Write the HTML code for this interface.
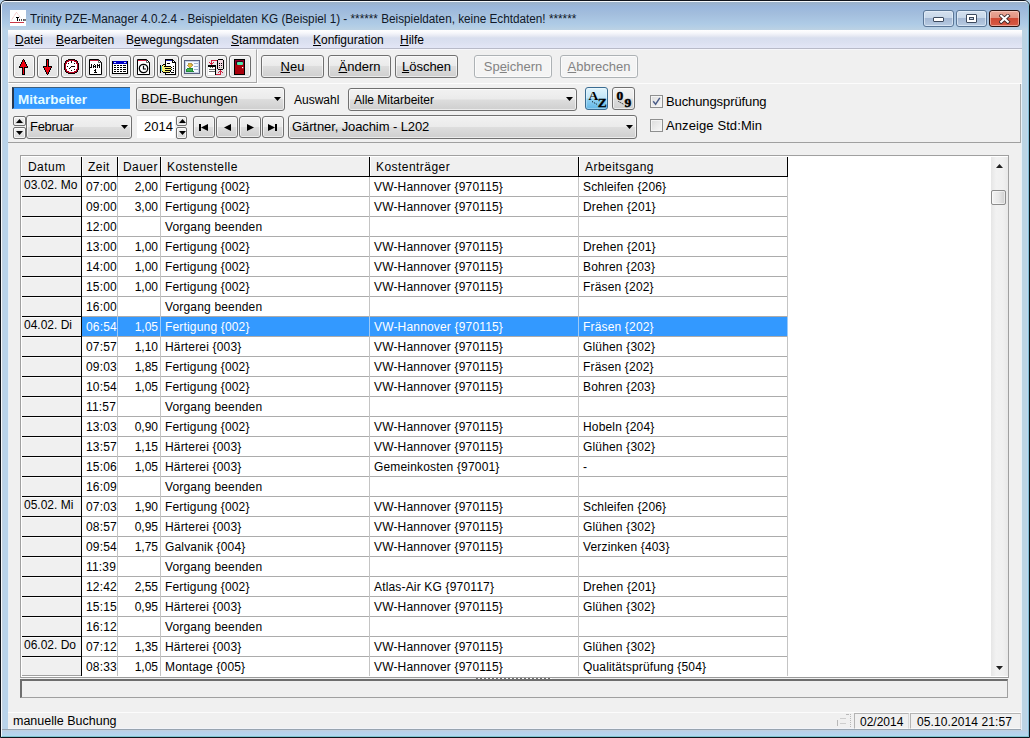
<!DOCTYPE html>
<html><head><meta charset="utf-8">
<style>
*{box-sizing:border-box}
html,body{margin:0;padding:0}
body{width:1030px;height:738px;overflow:hidden;position:relative;background:#b9d3ea;font-family:"Liberation Sans",sans-serif;font-size:12px;color:#000}
.a{position:absolute}
#frame{left:0;top:0;width:1030px;height:738px;border:1px solid #10141c;border-radius:6px 6px 0 0}
#frame2{left:1px;top:1px;width:1028px;height:736px;border:1px solid #f4f8fc;border-right-color:#84bcd0;border-bottom-color:#80c4d0;border-radius:5px 5px 0 0}
#titlebg{left:2px;top:2px;width:1026px;height:28px;background:linear-gradient(#9bb2ca 0px,#9ab7dc 5px,#a3bedd 12px,#aecbe6 22px,#bcd2e4 28px);border-radius:4px 4px 0 0}
#leftfr{left:2px;top:30px;width:6px;height:700px;background:#b9d3ea;border-left:1px solid #c4d2e0}
#rightfr{left:1021px;top:30px;width:7px;height:700px;background:linear-gradient(90deg,#e8f0f8 0 1px,#bcd4e4 1px 6px,#b8d8f4 6px)}
#bottomfr{left:2px;top:729px;width:1026px;height:7px;background:linear-gradient(#c0d0dc,#b8d0ea 30%,#b4d8ee);border-top:1px solid #98a4b0}
#title{left:30px;top:12px;font-size:12.5px;color:#101828;white-space:nowrap;transform-origin:0 0;transform:scaleX(0.939)}
#client{left:8px;top:30px;width:1014px;height:699px;background:#f0f0f0;border-left:1px solid #e8f0f8}
/* menu */
#menubar{left:8px;top:30px;width:1014px;height:19px;background:linear-gradient(#ffffff 0px,#f6f7fb 3px,#e6e9f3 6px,#d8deee 8px,#dbe0f0 12px,#e3e6f6 18px);border-bottom:1px solid #b8bac8}
.mi{position:absolute;top:33px;font-size:12px;white-space:nowrap;color:#000}
.u{text-decoration:underline}
/* toolbar */
#tbar{left:8px;top:49px;width:1014px;height:35px;background:#f0f0f0;border-top:1px solid #f6f6fa;border-bottom:1px solid #fcfcfc}
.tb{position:absolute;top:55px;width:22px;height:23px;border:1px solid #6c6c6c;border-radius:3px;background:linear-gradient(#f0f0f0,#e8e8e8 50%,#e2e2e2);box-shadow:inset 0 0 0 1px #fafafa}
.btn{position:absolute;top:55px;height:23px;border:1px solid #707070;border-radius:3px;background:linear-gradient(#f2f2f2,#ebebeb 45%,#dddddd 50%,#cfcfcf);text-align:center;font-size:13px;line-height:22px;color:#000;box-shadow:inset 0 0 0 1px rgba(255,255,255,0.6)}
.btn.dis{border-color:#adb2b5;background:#f4f4f4;color:#838383}
/* panel */
#panelline{left:8px;top:142px;width:1013px;height:1px;background:#a0a0a0}
.combo{position:absolute;height:23px;border:1px solid #707070;border-radius:3px;background:linear-gradient(#f2f2f2,#ebebeb 48%,#dddddd 52%,#cfcfcf);box-shadow:inset 0 0 0 1px rgba(255,255,255,0.6)}
.spn{position:absolute;border:1px solid #707070;border-radius:2px;background:linear-gradient(#f4f4f4,#e4e4e4 50%,#d8d8d8);box-shadow:inset 0 0 0 1px rgba(255,255,255,0.7)}
.txt{white-space:nowrap}
.combo .arr{position:absolute;right:8px;top:9px;width:0;height:0;border-left:4px solid transparent;border-right:4px solid transparent;border-top:4px solid #000}
/* grid */
#gridbox{left:20px;top:155px;width:989px;height:523px;border:1px solid #a0a0a0;border-bottom-color:#9a9a9a;background:#fff}
.hc{position:absolute;top:157px;height:19px;background:#f0f0f0;border-left:1px solid #fff}
.hc span{position:absolute;top:3px;white-space:nowrap;letter-spacing:0.45px}
.hl{position:absolute;top:157px;width:1px;height:20px;background:#000}
.hb{position:absolute;top:176px;height:1px;background:#000}
.fc{position:absolute;left:21px;width:61px;height:20px;background:#f0f0f0;border-right:1px solid #000;border-left:1px solid #fff;box-shadow:inset 0 1px 0 #fafafa}
.fc::after{content:"";position:absolute;left:0;right:0;bottom:0;height:1px;background:#000}
.fc.last{height:19px}
.fc.last::after{background:#a0a0a0}
.fc span{position:absolute;left:2px;top:1px;white-space:nowrap}
.dc{position:absolute;height:19px;overflow:hidden}
.dc span{position:absolute;left:4px;top:3px;white-space:nowrap;letter-spacing:0.17px}
.dc.r span{left:auto;right:2px;letter-spacing:0}
.dc.s{color:#fff}
.selrow{position:absolute;left:82px;width:706px;height:19px;background:#3399ff}
.gh{position:absolute;left:82px;width:706px;height:1px;background:#acacac}
.gv{position:absolute;top:177px;width:1px;height:499px;background:#c4c4c4}
#vscroll{left:991px;top:157px;width:17px;height:519px;background:linear-gradient(90deg,#e6e6e6,#f2f2f2 30%,#f0f0f0 70%,#e8e8e8)}
#hbar{left:20px;top:679px;width:988px;height:19px;border:1px solid #a0a0a0;border-top:2px solid #6e6e6e;border-left:2px solid #6e6e6e;background:#f0f0f0}
#status{left:8px;top:712px;width:1013px;height:17px;background:#f0f0f0;border-top:1px solid #fcfcfc;border-bottom:1px solid #f2f4fa}
.sp{position:absolute;top:713px;height:16px;border:1px solid #b4b4b4;border-right-color:#d8d8d8;border-bottom-color:#f8f8f8}
</style></head><body>
<div id="frame" class="a"></div>
<div id="frame2" class="a"></div>
<div id="titlebg" class="a"></div>
<div id="leftfr" class="a"></div>
<div id="bottomfr" class="a"></div>
<div id="client" class="a"></div>
<div id="rightfr" class="a"></div>

<!-- title icon -->
<div class="a" style="left:10px;top:10px;width:16px;height:16px;background:#fff">
<svg width="16" height="16" viewBox="0 0 16 16" shape-rendering="crispEdges"><path d="M1.3 10.5 L6.4 2.2 L10.3 7.6" fill="none" stroke="#e8a8a8" stroke-width="0.8" stroke-dasharray="1 0.6" shape-rendering="auto"/><rect x="6" y="7" width="3.2" height="1.2" fill="#000"/><rect x="7" y="7" width="1.3" height="3.6" fill="#000"/><rect x="9" y="9" width="1" height="1.6" fill="#333"/><rect x="10.5" y="9" width="1.5" height="1.6" fill="#555"/><rect x="12.5" y="9" width="1.5" height="1.6" fill="#555"/><rect x="14.3" y="9" width="1.5" height="1.6" fill="#777"/><rect x="0" y="12" width="14" height="1" fill="#c83848"/></svg>
</div>
<div id="title" class="a">Trinity PZE-Manager 4.0.2.4 - Beispieldaten KG (Beispiel 1) - ****** Beispieldaten, keine Echtdaten! ******</div>

<!-- caption buttons -->
<div class="a" style="left:923px;top:10px;width:31px;height:17px;border:1px solid #5a7696;border-radius:3px;background:linear-gradient(#d4e0ee,#c8d8ea 45%,#a4b8d4 50%,#b8cce2);box-shadow:inset 0 0 0 1px rgba(235,245,255,0.6)"><div class="a" style="left:9px;top:6px;width:11px;height:5px;background:#fff;border:1px solid #3c4a5e;border-radius:1px"></div></div>
<div class="a" style="left:956px;top:10px;width:31px;height:17px;border:1px solid #5a7696;border-radius:3px;background:linear-gradient(#d4e0ee,#c8d8ea 45%,#a4b8d4 50%,#b8cce2);box-shadow:inset 0 0 0 1px rgba(235,245,255,0.6)"><div class="a" style="left:9px;top:3px;width:11px;height:9px;background:#fff;border:1px solid #3c4a5e;border-radius:1px"><div class="a" style="left:2px;top:2px;width:5px;height:3px;border:1px solid #3c4a5e;background:#c8d4e4"></div></div></div>
<div class="a" style="left:989px;top:10px;width:31px;height:17px;border:1px solid #2a1412;border-radius:3px;background:linear-gradient(#eaa898,#e29482 45%,#cf4a34 50%,#d85a44);box-shadow:inset 0 0 0 1px rgba(255,220,210,0.55)"><svg class="a" style="left:9px;top:3px" width="12" height="10" viewBox="0 0 12 10"><path d="M2.2 1.8 L8.8 7.8 M8.8 1.8 L2.2 7.8" stroke="#3a2424" stroke-width="3.8" stroke-linecap="square"/><path d="M2.2 1.8 L8.8 7.8 M8.8 1.8 L2.2 7.8" stroke="#fff" stroke-width="2.2" stroke-linecap="square"/></svg></div>

<!-- menu -->
<div id="menubar" class="a"></div>
<div class="mi" style="left:15px"><span class="u">D</span>atei</div>
<div class="mi" style="left:56px"><span class="u">B</span>earbeiten</div>
<div class="mi" style="left:126px">B<span class="u">e</span>wegungsdaten</div>
<div class="mi" style="left:231px"><span class="u">S</span>tammdaten</div>
<div class="mi" style="left:313px"><span class="u">K</span>onfiguration</div>
<div class="mi" style="left:400px"><span class="u">H</span>ilfe</div>

<!-- toolbar -->
<div id="tbar" class="a"></div>
<div class="a" style="left:8px;top:49px;width:249px;height:34px;border-top:1px solid #fafafa;border-left:1px solid #fafafa;border-right:1px solid #a8a8a8;border-bottom:1px solid #a8a8a8;box-shadow:1px 1px 0 #fff"></div>
<div class="tb" style="left:13px"><svg class="a" style="left:2px;top:3px" width="16" height="16" viewBox="0 0 16 16"><g shape-rendering="crispEdges"><rect x="7" y="0" width="1" height="1" fill="#000"/><rect x="6" y="1" width="1" height="1" fill="#000"/><rect x="7" y="1" width="1" height="1" fill="#f00010"/><rect x="8" y="1" width="1" height="1" fill="#000"/><rect x="6" y="2" width="1" height="1" fill="#000"/><rect x="7" y="2" width="1" height="1" fill="#f00010"/><rect x="8" y="2" width="1" height="1" fill="#000"/><rect x="5" y="3" width="1" height="1" fill="#000"/><rect x="6" y="3" width="3" height="1" fill="#f00010"/><rect x="9" y="3" width="1" height="1" fill="#000"/><rect x="5" y="4" width="1" height="1" fill="#000"/><rect x="6" y="4" width="3" height="1" fill="#f00010"/><rect x="9" y="4" width="1" height="1" fill="#000"/><rect x="4" y="5" width="1" height="1" fill="#000"/><rect x="5" y="5" width="5" height="1" fill="#f00010"/><rect x="10" y="5" width="1" height="1" fill="#000"/><rect x="4" y="6" width="1" height="1" fill="#000"/><rect x="5" y="6" width="5" height="1" fill="#f00010"/><rect x="10" y="6" width="1" height="1" fill="#000"/><rect x="3" y="7" width="1" height="1" fill="#000"/><rect x="4" y="7" width="7" height="1" fill="#f00010"/><rect x="11" y="7" width="1" height="1" fill="#000"/><rect x="3" y="8" width="4" height="1" fill="#000"/><rect x="7" y="8" width="1" height="1" fill="#f00010"/><rect x="8" y="8" width="4" height="1" fill="#000"/><rect x="6" y="9" width="1" height="1" fill="#000"/><rect x="7" y="9" width="1" height="1" fill="#f00010"/><rect x="8" y="9" width="1" height="1" fill="#000"/><rect x="6" y="10" width="1" height="1" fill="#000"/><rect x="7" y="10" width="1" height="1" fill="#f00010"/><rect x="8" y="10" width="1" height="1" fill="#000"/><rect x="6" y="11" width="1" height="1" fill="#000"/><rect x="7" y="11" width="1" height="1" fill="#f00010"/><rect x="8" y="11" width="1" height="1" fill="#000"/><rect x="6" y="12" width="1" height="1" fill="#000"/><rect x="7" y="12" width="1" height="1" fill="#f00010"/><rect x="8" y="12" width="1" height="1" fill="#000"/><rect x="6" y="13" width="1" height="1" fill="#000"/><rect x="7" y="13" width="1" height="1" fill="#f00010"/><rect x="8" y="13" width="1" height="1" fill="#000"/><rect x="6" y="14" width="1" height="1" fill="#000"/><rect x="7" y="14" width="1" height="1" fill="#f00010"/><rect x="8" y="14" width="1" height="1" fill="#000"/><rect x="6" y="15" width="3" height="1" fill="#000"/></g></svg></div>
<div class="tb" style="left:37px"><svg class="a" style="left:2px;top:3px" width="16" height="16" viewBox="0 0 16 16"><g shape-rendering="crispEdges"><rect x="6" y="0" width="3" height="1" fill="#000"/><rect x="6" y="1" width="1" height="1" fill="#000"/><rect x="7" y="1" width="1" height="1" fill="#f00010"/><rect x="8" y="1" width="1" height="1" fill="#000"/><rect x="6" y="2" width="1" height="1" fill="#000"/><rect x="7" y="2" width="1" height="1" fill="#f00010"/><rect x="8" y="2" width="1" height="1" fill="#000"/><rect x="6" y="3" width="1" height="1" fill="#000"/><rect x="7" y="3" width="1" height="1" fill="#f00010"/><rect x="8" y="3" width="1" height="1" fill="#000"/><rect x="6" y="4" width="1" height="1" fill="#000"/><rect x="7" y="4" width="1" height="1" fill="#f00010"/><rect x="8" y="4" width="1" height="1" fill="#000"/><rect x="6" y="5" width="1" height="1" fill="#000"/><rect x="7" y="5" width="1" height="1" fill="#f00010"/><rect x="8" y="5" width="1" height="1" fill="#000"/><rect x="6" y="6" width="1" height="1" fill="#000"/><rect x="7" y="6" width="1" height="1" fill="#f00010"/><rect x="8" y="6" width="1" height="1" fill="#000"/><rect x="3" y="7" width="4" height="1" fill="#000"/><rect x="7" y="7" width="1" height="1" fill="#f00010"/><rect x="8" y="7" width="4" height="1" fill="#000"/><rect x="3" y="8" width="1" height="1" fill="#000"/><rect x="4" y="8" width="7" height="1" fill="#f00010"/><rect x="11" y="8" width="1" height="1" fill="#000"/><rect x="4" y="9" width="1" height="1" fill="#000"/><rect x="5" y="9" width="5" height="1" fill="#f00010"/><rect x="10" y="9" width="1" height="1" fill="#000"/><rect x="4" y="10" width="1" height="1" fill="#000"/><rect x="5" y="10" width="5" height="1" fill="#f00010"/><rect x="10" y="10" width="1" height="1" fill="#000"/><rect x="5" y="11" width="1" height="1" fill="#000"/><rect x="6" y="11" width="3" height="1" fill="#f00010"/><rect x="9" y="11" width="1" height="1" fill="#000"/><rect x="5" y="12" width="1" height="1" fill="#000"/><rect x="6" y="12" width="3" height="1" fill="#f00010"/><rect x="9" y="12" width="1" height="1" fill="#000"/><rect x="6" y="13" width="1" height="1" fill="#000"/><rect x="7" y="13" width="1" height="1" fill="#f00010"/><rect x="8" y="13" width="1" height="1" fill="#000"/><rect x="6" y="14" width="1" height="1" fill="#000"/><rect x="7" y="14" width="1" height="1" fill="#f00010"/><rect x="8" y="14" width="1" height="1" fill="#000"/><rect x="7" y="15" width="1" height="1" fill="#000"/></g></svg></div>
<div class="tb" style="left:61px"><svg class="a" style="left:2px;top:3px" width="16" height="16" viewBox="0 0 16 16"><g shape-rendering="crispEdges"><rect x="4" y="0" width="7" height="1" fill="#100000"/><rect x="2" y="1" width="2" height="1" fill="#100000"/><rect x="4" y="1" width="7" height="1" fill="#b80020"/><rect x="11" y="1" width="2" height="1" fill="#100000"/><rect x="1" y="2" width="1" height="1" fill="#100000"/><rect x="2" y="2" width="3" height="1" fill="#b80020"/><rect x="5" y="2" width="2" height="1" fill="#fff"/><rect x="7" y="2" width="1" height="1" fill="#100000"/><rect x="8" y="2" width="2" height="1" fill="#fff"/><rect x="10" y="2" width="3" height="1" fill="#b80020"/><rect x="13" y="2" width="1" height="1" fill="#100000"/><rect x="1" y="3" width="1" height="1" fill="#100000"/><rect x="2" y="3" width="1" height="1" fill="#b80020"/><rect x="3" y="3" width="4" height="1" fill="#fff"/><rect x="7" y="3" width="1" height="1" fill="#100000"/><rect x="8" y="3" width="4" height="1" fill="#fff"/><rect x="12" y="3" width="1" height="1" fill="#b80020"/><rect x="13" y="3" width="1" height="1" fill="#100000"/><rect x="0" y="4" width="1" height="1" fill="#100000"/><rect x="1" y="4" width="2" height="1" fill="#b80020"/><rect x="3" y="4" width="1" height="1" fill="#fff"/><rect x="4" y="4" width="1" height="1" fill="#100000"/><rect x="5" y="4" width="5" height="1" fill="#fff"/><rect x="10" y="4" width="1" height="1" fill="#100000"/><rect x="11" y="4" width="1" height="1" fill="#fff"/><rect x="12" y="4" width="2" height="1" fill="#b80020"/><rect x="14" y="4" width="1" height="1" fill="#100000"/><rect x="0" y="5" width="1" height="1" fill="#100000"/><rect x="1" y="5" width="1" height="1" fill="#b80020"/><rect x="2" y="5" width="11" height="1" fill="#fff"/><rect x="13" y="5" width="1" height="1" fill="#b80020"/><rect x="14" y="5" width="1" height="1" fill="#100000"/><rect x="0" y="6" width="1" height="1" fill="#100000"/><rect x="1" y="6" width="1" height="1" fill="#b80020"/><rect x="2" y="6" width="11" height="1" fill="#fff"/><rect x="13" y="6" width="1" height="1" fill="#b80020"/><rect x="14" y="6" width="1" height="1" fill="#100000"/><rect x="0" y="7" width="1" height="1" fill="#100000"/><rect x="1" y="7" width="1" height="1" fill="#b80020"/><rect x="2" y="7" width="1" height="1" fill="#fff"/><rect x="3" y="7" width="1" height="1" fill="#100000"/><rect x="4" y="7" width="3" height="1" fill="#fff"/><rect x="7" y="7" width="4" height="1" fill="#100000"/><rect x="11" y="7" width="2" height="1" fill="#fff"/><rect x="13" y="7" width="1" height="1" fill="#b80020"/><rect x="14" y="7" width="1" height="1" fill="#100000"/><rect x="0" y="8" width="1" height="1" fill="#100000"/><rect x="1" y="8" width="1" height="1" fill="#b80020"/><rect x="2" y="8" width="4" height="1" fill="#fff"/><rect x="6" y="8" width="1" height="1" fill="#100000"/><rect x="7" y="8" width="6" height="1" fill="#fff"/><rect x="13" y="8" width="1" height="1" fill="#b80020"/><rect x="14" y="8" width="1" height="1" fill="#100000"/><rect x="0" y="9" width="1" height="1" fill="#100000"/><rect x="1" y="9" width="1" height="1" fill="#b80020"/><rect x="2" y="9" width="3" height="1" fill="#fff"/><rect x="5" y="9" width="1" height="1" fill="#100000"/><rect x="6" y="9" width="7" height="1" fill="#fff"/><rect x="13" y="9" width="1" height="1" fill="#b80020"/><rect x="14" y="9" width="1" height="1" fill="#100000"/><rect x="0" y="10" width="1" height="1" fill="#100000"/><rect x="1" y="10" width="2" height="1" fill="#b80020"/><rect x="3" y="10" width="7" height="1" fill="#fff"/><rect x="10" y="10" width="1" height="1" fill="#100000"/><rect x="11" y="10" width="1" height="1" fill="#fff"/><rect x="12" y="10" width="2" height="1" fill="#b80020"/><rect x="14" y="10" width="1" height="1" fill="#100000"/><rect x="1" y="11" width="1" height="1" fill="#100000"/><rect x="2" y="11" width="1" height="1" fill="#b80020"/><rect x="3" y="11" width="4" height="1" fill="#fff"/><rect x="7" y="11" width="1" height="1" fill="#100000"/><rect x="8" y="11" width="4" height="1" fill="#fff"/><rect x="12" y="11" width="1" height="1" fill="#b80020"/><rect x="13" y="11" width="1" height="1" fill="#100000"/><rect x="1" y="12" width="1" height="1" fill="#100000"/><rect x="2" y="12" width="3" height="1" fill="#b80020"/><rect x="5" y="12" width="5" height="1" fill="#fff"/><rect x="10" y="12" width="3" height="1" fill="#b80020"/><rect x="13" y="12" width="1" height="1" fill="#100000"/><rect x="2" y="13" width="2" height="1" fill="#100000"/><rect x="4" y="13" width="7" height="1" fill="#b80020"/><rect x="11" y="13" width="2" height="1" fill="#100000"/><rect x="4" y="14" width="7" height="1" fill="#100000"/></g></svg></div>
<div class="tb" style="left:85px"><svg class="a" style="left:2px;top:3px" width="16" height="16" viewBox="0 0 16 16"><path d="M1.5 0.5 H10.5 L13.5 3.5 V15.5 H1.5 Z" fill="#fff" stroke="#000"/><rect x="2" y="1" width="8.5" height="1" fill="#c82040"/><path d="M10.5 0.5 V3.5 H13.5" fill="none" stroke="#000" stroke-width="0.6"/><g fill="#000" shape-rendering="crispEdges"><rect x="3" y="5" width="1" height="4"/><rect x="2" y="8" width="1" height="1"/><rect x="6" y="5" width="1" height="1"/><rect x="5" y="6" width="1" height="3"/><rect x="7" y="6" width="1" height="3"/><rect x="6" y="7" width="1" height="1"/><rect x="9" y="5" width="1" height="4"/><rect x="11" y="5" width="1" height="4"/><rect x="10" y="6" width="1" height="1"/><rect x="7" y="10" width="1" height="4"/><rect x="6" y="11" width="1" height="1"/><rect x="6" y="13" width="3" height="1"/></g></svg></div>
<div class="tb" style="left:109px"><svg class="a" style="left:2px;top:3px" width="16" height="16" viewBox="0 0 16 16"><g shape-rendering="crispEdges"><rect x="0" y="2" width="16" height="13" fill="#000"/><rect x="1" y="5" width="14" height="9" fill="#fff"/><rect x="1" y="2" width="14" height="3" fill="#0000c8"/><rect x="2" y="3" width="2" height="1" fill="#c8d8ff"/><rect x="12" y="3" width="2" height="1" fill="#c8d8ff"/><g fill="#000"><rect x="2" y="6" width="2" height="1"/><rect x="5" y="6" width="2" height="1"/><rect x="8" y="6" width="2" height="1"/><rect x="11" y="6" width="3" height="1"/><rect x="2" y="8" width="2" height="1"/><rect x="5" y="8" width="2" height="1"/><rect x="8" y="8" width="2" height="1"/><rect x="11" y="8" width="3" height="1"/><rect x="2" y="10" width="2" height="1"/><rect x="5" y="10" width="2" height="1"/><rect x="8" y="10" width="2" height="1"/><rect x="11" y="10" width="3" height="1"/><rect x="2" y="12" width="2" height="1"/><rect x="5" y="12" width="2" height="1"/><rect x="8" y="12" width="2" height="1"/><rect x="11" y="12" width="3" height="1"/></g></g></svg></div>
<div class="tb" style="left:133px"><svg class="a" style="left:2px;top:3px" width="16" height="16" viewBox="0 0 16 16"><path d="M1.5 0.5 H10.5 L13.5 3.5 V15.5 H1.5 Z" fill="#fff" stroke="#000"/><rect x="2" y="1" width="8.5" height="1" fill="#c82040"/><path d="M10.5 0.5 V3.5 H13.5" fill="none" stroke="#000" stroke-width="0.6"/><circle cx="7.5" cy="9.5" r="4.2" fill="none" stroke="#000" stroke-width="1.3"/><path d="M7.5 6.8 V10 H10" fill="none" stroke="#000" stroke-width="1.2"/></svg></div>
<div class="tb" style="left:157px"><svg class="a" style="left:2px;top:3px" width="16" height="16" viewBox="0 0 16 16"><g shape-rendering="crispEdges"><rect x="5" y="0" width="8" height="1" fill="#000"/><rect x="5" y="1" width="1" height="1" fill="#000"/><rect x="6" y="1" width="6" height="1" fill="#2828a8"/><rect x="12" y="1" width="2" height="1" fill="#000"/><rect x="5" y="2" width="1" height="1" fill="#000"/><rect x="6" y="2" width="6" height="1" fill="#fff"/><rect x="12" y="2" width="1" height="1" fill="#000"/><rect x="13" y="2" width="1" height="1" fill="#fff"/><rect x="14" y="2" width="1" height="1" fill="#000"/><rect x="5" y="3" width="1" height="1" fill="#000"/><rect x="6" y="3" width="6" height="1" fill="#fff"/><rect x="12" y="3" width="4" height="1" fill="#000"/><rect x="5" y="4" width="1" height="1" fill="#000"/><rect x="6" y="4" width="1" height="1" fill="#fff"/><rect x="7" y="4" width="3" height="1" fill="#000"/><rect x="10" y="4" width="5" height="1" fill="#fff"/><rect x="15" y="4" width="1" height="1" fill="#000"/><rect x="3" y="5" width="3" height="1" fill="#000"/><rect x="6" y="5" width="9" height="1" fill="#fff"/><rect x="15" y="5" width="1" height="1" fill="#000"/><rect x="0" y="6" width="1" height="1" fill="#000"/><rect x="2" y="6" width="1" height="1" fill="#000"/><rect x="3" y="6" width="2" height="1" fill="#f8f070"/><rect x="5" y="6" width="1" height="1" fill="#000"/><rect x="6" y="6" width="9" height="1" fill="#fff"/><rect x="15" y="6" width="1" height="1" fill="#000"/><rect x="0" y="7" width="1" height="1" fill="#000"/><rect x="1" y="7" width="1" height="1" fill="#40d0d0"/><rect x="2" y="7" width="2" height="1" fill="#f8f070"/><rect x="4" y="7" width="7" height="1" fill="#000"/><rect x="11" y="7" width="2" height="1" fill="#fff"/><rect x="13" y="7" width="1" height="1" fill="#000"/><rect x="14" y="7" width="1" height="1" fill="#fff"/><rect x="15" y="7" width="1" height="1" fill="#000"/><rect x="0" y="8" width="1" height="1" fill="#000"/><rect x="1" y="8" width="1" height="1" fill="#40d0d0"/><rect x="2" y="8" width="9" height="1" fill="#f8f070"/><rect x="11" y="8" width="1" height="1" fill="#000"/><rect x="12" y="8" width="3" height="1" fill="#fff"/><rect x="15" y="8" width="1" height="1" fill="#000"/><rect x="0" y="9" width="1" height="1" fill="#000"/><rect x="1" y="9" width="1" height="1" fill="#40d0d0"/><rect x="2" y="9" width="3" height="1" fill="#f8f070"/><rect x="5" y="9" width="6" height="1" fill="#000"/><rect x="11" y="9" width="2" height="1" fill="#fff"/><rect x="13" y="9" width="1" height="1" fill="#000"/><rect x="14" y="9" width="1" height="1" fill="#fff"/><rect x="15" y="9" width="1" height="1" fill="#000"/><rect x="0" y="10" width="1" height="1" fill="#000"/><rect x="1" y="10" width="1" height="1" fill="#40d0d0"/><rect x="2" y="10" width="9" height="1" fill="#f8f070"/><rect x="11" y="10" width="1" height="1" fill="#000"/><rect x="12" y="10" width="3" height="1" fill="#fff"/><rect x="15" y="10" width="1" height="1" fill="#000"/><rect x="0" y="11" width="1" height="1" fill="#000"/><rect x="1" y="11" width="1" height="1" fill="#40d0d0"/><rect x="2" y="11" width="3" height="1" fill="#f8f070"/><rect x="5" y="11" width="6" height="1" fill="#000"/><rect x="11" y="11" width="2" height="1" fill="#fff"/><rect x="13" y="11" width="1" height="1" fill="#000"/><rect x="14" y="11" width="1" height="1" fill="#fff"/><rect x="15" y="11" width="1" height="1" fill="#000"/><rect x="0" y="12" width="1" height="1" fill="#000"/><rect x="2" y="12" width="1" height="1" fill="#000"/><rect x="3" y="12" width="7" height="1" fill="#f8f070"/><rect x="10" y="12" width="1" height="1" fill="#000"/><rect x="11" y="12" width="4" height="1" fill="#fff"/><rect x="15" y="12" width="1" height="1" fill="#000"/><rect x="0" y="13" width="1" height="1" fill="#000"/><rect x="3" y="13" width="7" height="1" fill="#000"/><rect x="10" y="13" width="1" height="1" fill="#fff"/><rect x="11" y="13" width="3" height="1" fill="#000"/><rect x="14" y="13" width="1" height="1" fill="#fff"/><rect x="15" y="13" width="1" height="1" fill="#000"/><rect x="5" y="14" width="1" height="1" fill="#000"/><rect x="6" y="14" width="9" height="1" fill="#fff"/><rect x="15" y="14" width="1" height="1" fill="#000"/><rect x="5" y="15" width="11" height="1" fill="#000"/></g></svg></div>
<div class="tb" style="left:181px"><svg class="a" style="left:2px;top:3px" width="16" height="16" viewBox="0 0 16 16"><g shape-rendering="crispEdges"><rect x="0" y="1" width="16" height="1" fill="#586080"/><rect x="0" y="2" width="1" height="1" fill="#586080"/><rect x="1" y="2" width="14" height="1" fill="#c8d4e8"/><rect x="15" y="2" width="1" height="1" fill="#586080"/><rect x="0" y="3" width="1" height="1" fill="#586080"/><rect x="1" y="3" width="1" height="1" fill="#c8d4e8"/><rect x="2" y="3" width="12" height="1" fill="#f4f8ff"/><rect x="14" y="3" width="1" height="1" fill="#c8d4e8"/><rect x="15" y="3" width="1" height="1" fill="#586080"/><rect x="0" y="4" width="1" height="1" fill="#586080"/><rect x="1" y="4" width="1" height="1" fill="#c8d4e8"/><rect x="2" y="4" width="2" height="1" fill="#f4f8ff"/><rect x="4" y="4" width="4" height="1" fill="#b89850"/><rect x="8" y="4" width="2" height="1" fill="#f4f8ff"/><rect x="10" y="4" width="4" height="1" fill="#a0b4d0"/><rect x="14" y="4" width="1" height="1" fill="#c8d4e8"/><rect x="15" y="4" width="1" height="1" fill="#586080"/><rect x="0" y="5" width="1" height="1" fill="#586080"/><rect x="1" y="5" width="1" height="1" fill="#c8d4e8"/><rect x="2" y="5" width="2" height="1" fill="#f4f8ff"/><rect x="4" y="5" width="1" height="1" fill="#b89850"/><rect x="5" y="5" width="2" height="1" fill="#e8c040"/><rect x="7" y="5" width="2" height="1" fill="#b89850"/><rect x="9" y="5" width="5" height="1" fill="#f4f8ff"/><rect x="14" y="5" width="1" height="1" fill="#c8d4e8"/><rect x="15" y="5" width="1" height="1" fill="#586080"/><rect x="0" y="6" width="1" height="1" fill="#586080"/><rect x="1" y="6" width="1" height="1" fill="#c8d4e8"/><rect x="2" y="6" width="1" height="1" fill="#f4f8ff"/><rect x="3" y="6" width="1" height="1" fill="#b89850"/><rect x="4" y="6" width="4" height="1" fill="#e8c040"/><rect x="8" y="6" width="1" height="1" fill="#b89850"/><rect x="9" y="6" width="5" height="1" fill="#f4f8ff"/><rect x="14" y="6" width="1" height="1" fill="#c8d4e8"/><rect x="15" y="6" width="1" height="1" fill="#586080"/><rect x="0" y="7" width="1" height="1" fill="#586080"/><rect x="1" y="7" width="1" height="1" fill="#c8d4e8"/><rect x="2" y="7" width="2" height="1" fill="#f4f8ff"/><rect x="4" y="7" width="1" height="1" fill="#b89850"/><rect x="5" y="7" width="2" height="1" fill="#e8c040"/><rect x="7" y="7" width="1" height="1" fill="#b89850"/><rect x="8" y="7" width="2" height="1" fill="#f4f8ff"/><rect x="10" y="7" width="4" height="1" fill="#a0b4d0"/><rect x="14" y="7" width="1" height="1" fill="#c8d4e8"/><rect x="15" y="7" width="1" height="1" fill="#586080"/><rect x="0" y="8" width="1" height="1" fill="#586080"/><rect x="1" y="8" width="1" height="1" fill="#c8d4e8"/><rect x="2" y="8" width="3" height="1" fill="#f4f8ff"/><rect x="5" y="8" width="2" height="1" fill="#b89850"/><rect x="7" y="8" width="7" height="1" fill="#f4f8ff"/><rect x="14" y="8" width="1" height="1" fill="#c8d4e8"/><rect x="15" y="8" width="1" height="1" fill="#586080"/><rect x="0" y="9" width="1" height="1" fill="#586080"/><rect x="1" y="9" width="1" height="1" fill="#c8d4e8"/><rect x="2" y="9" width="1" height="1" fill="#f4f8ff"/><rect x="3" y="9" width="6" height="1" fill="#208838"/><rect x="9" y="9" width="5" height="1" fill="#f4f8ff"/><rect x="14" y="9" width="1" height="1" fill="#c8d4e8"/><rect x="15" y="9" width="1" height="1" fill="#586080"/><rect x="0" y="10" width="1" height="1" fill="#586080"/><rect x="1" y="10" width="1" height="1" fill="#c8d4e8"/><rect x="2" y="10" width="1" height="1" fill="#208838"/><rect x="3" y="10" width="5" height="1" fill="#40b050"/><rect x="8" y="10" width="1" height="1" fill="#208838"/><rect x="9" y="10" width="1" height="1" fill="#f4f8ff"/><rect x="10" y="10" width="4" height="1" fill="#a0b4d0"/><rect x="14" y="10" width="1" height="1" fill="#c8d4e8"/><rect x="15" y="10" width="1" height="1" fill="#586080"/><rect x="0" y="11" width="1" height="1" fill="#586080"/><rect x="1" y="11" width="1" height="1" fill="#c8d4e8"/><rect x="2" y="11" width="1" height="1" fill="#208838"/><rect x="3" y="11" width="5" height="1" fill="#40b050"/><rect x="8" y="11" width="1" height="1" fill="#208838"/><rect x="9" y="11" width="5" height="1" fill="#f4f8ff"/><rect x="14" y="11" width="1" height="1" fill="#c8d4e8"/><rect x="15" y="11" width="1" height="1" fill="#586080"/><rect x="0" y="12" width="1" height="1" fill="#586080"/><rect x="1" y="12" width="1" height="1" fill="#c8d4e8"/><rect x="2" y="12" width="8" height="1" fill="#208838"/><rect x="10" y="12" width="4" height="1" fill="#f4f8ff"/><rect x="14" y="12" width="1" height="1" fill="#c8d4e8"/><rect x="15" y="12" width="1" height="1" fill="#586080"/><rect x="0" y="13" width="1" height="1" fill="#586080"/><rect x="1" y="13" width="14" height="1" fill="#c8d4e8"/><rect x="15" y="13" width="1" height="1" fill="#586080"/><rect x="0" y="14" width="16" height="1" fill="#586080"/></g></svg></div>
<div class="tb" style="left:205px"><svg class="a" style="left:2px;top:3px" width="16" height="16" viewBox="0 0 16 16"><g shape-rendering="crispEdges"><rect x="10" y="0" width="5" height="1" fill="#000"/><rect x="3" y="1" width="6" height="1" fill="#d02040"/><rect x="9" y="1" width="1" height="1" fill="#000"/><rect x="10" y="1" width="5" height="1" fill="#f0d8e0"/><rect x="15" y="1" width="1" height="1" fill="#000"/><rect x="3" y="2" width="1" height="1" fill="#d02040"/><rect x="9" y="2" width="1" height="1" fill="#000"/><rect x="10" y="2" width="5" height="1" fill="#f0d8e0"/><rect x="15" y="2" width="1" height="1" fill="#000"/><rect x="1" y="3" width="1" height="1" fill="#d02040"/><rect x="3" y="3" width="1" height="1" fill="#d02040"/><rect x="5" y="3" width="1" height="1" fill="#d02040"/><rect x="9" y="3" width="1" height="1" fill="#000"/><rect x="10" y="3" width="5" height="1" fill="#f0d8e0"/><rect x="15" y="3" width="1" height="1" fill="#000"/><rect x="2" y="4" width="3" height="1" fill="#d02040"/><rect x="9" y="4" width="1" height="1" fill="#000"/><rect x="10" y="4" width="1" height="1" fill="#f0d8e0"/><rect x="11" y="4" width="1" height="1" fill="#000"/><rect x="12" y="4" width="1" height="1" fill="#f0d8e0"/><rect x="13" y="4" width="1" height="1" fill="#000"/><rect x="14" y="4" width="1" height="1" fill="#f0d8e0"/><rect x="15" y="4" width="1" height="1" fill="#000"/><rect x="3" y="5" width="1" height="1" fill="#d02040"/><rect x="9" y="5" width="1" height="1" fill="#000"/><rect x="10" y="5" width="5" height="1" fill="#f0d8e0"/><rect x="15" y="5" width="1" height="1" fill="#000"/><rect x="0" y="6" width="8" height="1" fill="#000"/><rect x="9" y="6" width="1" height="1" fill="#000"/><rect x="10" y="6" width="1" height="1" fill="#f0d8e0"/><rect x="11" y="6" width="1" height="1" fill="#000"/><rect x="12" y="6" width="1" height="1" fill="#f0d8e0"/><rect x="13" y="6" width="1" height="1" fill="#000"/><rect x="14" y="6" width="1" height="1" fill="#f0d8e0"/><rect x="15" y="6" width="1" height="1" fill="#000"/><rect x="0" y="7" width="8" height="1" fill="#000"/><rect x="9" y="7" width="1" height="1" fill="#000"/><rect x="10" y="7" width="5" height="1" fill="#f0d8e0"/><rect x="15" y="7" width="1" height="1" fill="#000"/><rect x="0" y="8" width="2" height="1" fill="#fff"/><rect x="2" y="8" width="1" height="1" fill="#50a060"/><rect x="3" y="8" width="1" height="1" fill="#fff"/><rect x="4" y="8" width="1" height="1" fill="#804040"/><rect x="5" y="8" width="2" height="1" fill="#fff"/><rect x="7" y="8" width="1" height="1" fill="#000"/><rect x="9" y="8" width="1" height="1" fill="#000"/><rect x="10" y="8" width="1" height="1" fill="#f0d8e0"/><rect x="11" y="8" width="1" height="1" fill="#804040"/><rect x="12" y="8" width="1" height="1" fill="#f0d8e0"/><rect x="13" y="8" width="1" height="1" fill="#50a060"/><rect x="14" y="8" width="1" height="1" fill="#f0d8e0"/><rect x="15" y="8" width="1" height="1" fill="#000"/><rect x="0" y="9" width="7" height="1" fill="#fff"/><rect x="7" y="9" width="1" height="1" fill="#000"/><rect x="9" y="9" width="1" height="1" fill="#000"/><rect x="10" y="9" width="5" height="1" fill="#f0d8e0"/><rect x="15" y="9" width="1" height="1" fill="#000"/><rect x="0" y="10" width="1" height="1" fill="#fff"/><rect x="1" y="10" width="6" height="1" fill="#707070"/><rect x="7" y="10" width="1" height="1" fill="#000"/><rect x="10" y="10" width="5" height="1" fill="#000"/><rect x="0" y="11" width="7" height="1" fill="#fff"/><rect x="7" y="11" width="1" height="1" fill="#000"/><rect x="12" y="11" width="1" height="1" fill="#d02040"/><rect x="0" y="12" width="1" height="1" fill="#fff"/><rect x="1" y="12" width="6" height="1" fill="#707070"/><rect x="7" y="12" width="1" height="1" fill="#000"/><rect x="11" y="12" width="3" height="1" fill="#d02040"/><rect x="0" y="13" width="7" height="1" fill="#fff"/><rect x="7" y="13" width="1" height="1" fill="#000"/><rect x="10" y="13" width="1" height="1" fill="#d02040"/><rect x="12" y="13" width="1" height="1" fill="#d02040"/><rect x="14" y="13" width="1" height="1" fill="#d02040"/><rect x="0" y="14" width="7" height="1" fill="#fff"/><rect x="7" y="14" width="1" height="1" fill="#000"/><rect x="12" y="14" width="1" height="1" fill="#d02040"/><rect x="0" y="15" width="7" height="1" fill="#fff"/><rect x="7" y="15" width="1" height="1" fill="#000"/><rect x="8" y="15" width="5" height="1" fill="#d02040"/></g></svg></div>
<div class="tb" style="left:229px"><svg class="a" style="left:2px;top:3px" width="16" height="16" viewBox="0 0 16 16"><rect x="2" y="0" width="11" height="16" fill="#000"/><rect x="3" y="1" width="9" height="14" fill="#a8000c"/><rect x="3" y="1" width="9" height="4" fill="#90002a"/><rect x="4" y="2" width="7" height="4" rx="1" fill="#000" opacity="0.6"/><rect x="5" y="3" width="6" height="3" rx="1" fill="#50e8b0"/><rect x="10" y="8" width="1.2" height="1.2" fill="#fff"/></svg></div>

<div class="btn" style="left:261px;width:63px"><span class="u">N</span>eu</div>
<div class="btn" style="left:328px;width:63px"><span class="u">Ä</span>ndern</div>
<div class="btn" style="left:395px;width:63px"><span class="u">L</span>öschen</div>
<div class="btn dis" style="left:474px;width:78px">Sp<span class="u">e</span>ichern</div>
<div class="btn dis" style="left:560px;width:78px"><span class="u">A</span>bbrechen</div>

<!-- panel -->
<div class="a" style="left:12px;top:87px;width:118px;height:22px;background:#3399ff;border-top:1px solid #3c5f80;border-left:2px solid #28384c;border-bottom:1px solid #4aa4ff"></div>
<div class="a txt" style="left:18px;top:92px;font-weight:bold;font-size:13.5px;color:#e4fcff">Mitarbeiter</div>
<div class="combo" style="left:136px;top:87px;width:149px;height:24px"></div><div class="a txt" style="left:141px;top:91px;font-size:13px;letter-spacing:0px">BDE-Buchungen</div><svg class="a" style="left:274px;top:97px" width="7" height="4" viewBox="0 0 7 4"><path d="M0 0 H7 L3.5 4 Z" fill="#000"/></svg>
<div class="a txt" style="left:294px;top:93px;font-size:12px">Auswahl</div>
<div class="combo" style="left:348px;top:88px;width:229px;height:23px"></div><div class="a txt" style="left:354px;top:93px;font-size:12px;letter-spacing:0px">Alle Mitarbeiter</div><svg class="a" style="left:566px;top:97px" width="7" height="4" viewBox="0 0 7 4"><path d="M0 0 H7 L3.5 4 Z" fill="#000"/></svg>
<div class="a" style="left:585px;top:87px;width:23px;height:23px;border:1px solid #3a6c92;border-radius:3px;background:linear-gradient(#e0f4fd,#c4e6f8 45%,#8fd0f2 55%,#62b6e6);box-shadow:inset 0 0 0 1px rgba(255,255,255,0.3)"></div>
<svg class="a" style="left:585px;top:87px" width="23" height="23" viewBox="0 0 23 23"><text x="3.4" y="12.5" font-family="Liberation Serif" font-weight="bold" font-size="13.5" fill="#000">A</text><text x="12.8" y="19.8" font-family="Liberation Serif" font-weight="bold" font-size="13.5" fill="#000" stroke="#000" stroke-width="0.3">Z</text><path d="M7 14.5 L12.2 17.5" stroke="#000" stroke-width="1" stroke-dasharray="1 1.2"/></svg>
<div class="a" style="left:612px;top:87px;width:23px;height:23px;border:1px solid #707070;border-radius:3px;background:linear-gradient(#f2f2f2,#ebebeb 48%,#dddddd 52%,#cfcfcf);box-shadow:inset 0 0 0 1px rgba(255,255,255,0.6)"></div>
<svg class="a" style="left:612px;top:87px" width="23" height="23" viewBox="0 0 23 23"><text x="4.6" y="12.5" font-family="Liberation Serif" font-weight="bold" font-size="13.5" fill="#000" stroke="#000" stroke-width="0.5">0</text><text x="12.6" y="19.8" font-family="Liberation Serif" font-weight="bold" font-size="13.5" fill="#000" stroke="#000" stroke-width="0.5">9</text><path d="M6.5 14.5 L12 17.5" stroke="#000" stroke-width="1" stroke-dasharray="1 1.2"/></svg>
<div class="a" style="left:650px;top:95px;width:13px;height:13px;border:1px solid #8e8f8f;background:linear-gradient(135deg,#dcdcdc,#f8f8f8);box-shadow:inset 0 0 0 1px #f4f4f4"></div>
<svg class="a" style="left:652px;top:97px" width="9" height="9" viewBox="0 0 9 9"><path d="M1.2 4.2 L3.6 7.2 L7.8 0.8" fill="none" stroke="#4a5c88" stroke-width="1.4"/></svg>
<div class="a txt" style="left:666px;top:94px;font-size:13px;letter-spacing:-0.1px">Buchungsprüfung</div>
<div class="a" style="left:650px;top:119px;width:13px;height:13px;border:1px solid #8e8f8f;background:linear-gradient(135deg,#dcdcdc,#f8f8f8);box-shadow:inset 0 0 0 1px #f4f4f4"></div>
<div class="a txt" style="left:666px;top:118px;font-size:13px;letter-spacing:0.1px">Anzeige Std:Min</div>
<div class="spn" style="left:13px;top:116px;width:13px;height:10px"></div><div class="spn" style="left:13px;top:127px;width:13px;height:12px"></div><svg class="a" style="left:16px;top:119px" width="7" height="4" viewBox="0 0 7 4"><path d="M0 4 H7 L3.5 0 Z" fill="#000"/></svg><svg class="a" style="left:16px;top:131px" width="7" height="4" viewBox="0 0 7 4"><path d="M0 0 H7 L3.5 4 Z" fill="#000"/></svg>
<div class="combo" style="left:26px;top:115px;width:106px;height:24px"></div><div class="a txt" style="left:30px;top:119px;font-size:13px;letter-spacing:-0.3px">Februar</div><svg class="a" style="left:121px;top:125px" width="7" height="4" viewBox="0 0 7 4"><path d="M0 0 H7 L3.5 4 Z" fill="#000"/></svg>
<div class="a" style="left:136px;top:115px;width:40px;height:24px;background:#fff;border:1px solid #f0f0f0;border-top-color:#e4e4e4"></div>
<div class="a txt" style="left:144px;top:119px;font-size:13px">2014</div>
<div class="spn" style="left:176px;top:116px;width:11px;height:10px"></div><div class="spn" style="left:176px;top:127px;width:11px;height:12px"></div><svg class="a" style="left:179px;top:119px" width="7" height="4" viewBox="0 0 7 4"><path d="M0 4 H7 L3.5 0 Z" fill="#000"/></svg><svg class="a" style="left:179px;top:131px" width="7" height="4" viewBox="0 0 7 4"><path d="M0 0 H7 L3.5 4 Z" fill="#000"/></svg>
<div class="combo" style="left:193px;top:116px;width:22px;height:22px"></div>
<svg class="a" style="left:199px;top:124px" width="9" height="7" viewBox="0 0 9 7" fill="#000"><rect x="0" y="0" width="2" height="7"/><path d="M2 3.5 L9 0 V7 Z"/></svg>
<div class="combo" style="left:216px;top:116px;width:22px;height:22px"></div>
<svg class="a" style="left:224px;top:124px" width="9" height="7" viewBox="0 0 9 7" fill="#000"><path d="M0 3.5 L7 0 V7 Z"/></svg>
<div class="combo" style="left:239px;top:116px;width:22px;height:22px"></div>
<svg class="a" style="left:247px;top:124px" width="9" height="7" viewBox="0 0 9 7" fill="#000"><path d="M7 3.5 L0 0 V7 Z"/></svg>
<div class="combo" style="left:262px;top:116px;width:22px;height:22px"></div>
<svg class="a" style="left:268px;top:124px" width="9" height="7" viewBox="0 0 9 7" fill="#000"><path d="M7 3.5 L0 0 V7 Z"/><rect x="7" y="0" width="2" height="7"/></svg>
<div class="combo" style="left:288px;top:115px;width:349px;height:24px"></div><div class="a txt" style="left:292px;top:119px;font-size:13px;letter-spacing:-0.1px">Gärtner, Joachim - L202</div><svg class="a" style="left:626px;top:125px" width="7" height="4" viewBox="0 0 7 4"><path d="M0 0 H7 L3.5 4 Z" fill="#000"/></svg>
<div id="panelline" class="a"></div>
<div class="a" style="left:1020px;top:84px;width:1px;height:59px;background:#a8a8a8"></div>

<!-- grid -->
<div id="gridbox" class="a"></div>
<div class="hc" style="left:21px;width:60px"><span style="left:6px">Datum</span></div>
<div class="hl" style="left:81px"></div>
<div class="hc" style="left:82px;width:35px"><span style="left:5px">Zeit</span></div>
<div class="hl" style="left:117px"></div>
<div class="hc" style="left:118px;width:42px"><span style="left:4px">Dauer</span></div>
<div class="hl" style="left:160px"></div>
<div class="hc" style="left:161px;width:208px"><span style="left:5px">Kostenstelle</span></div>
<div class="hl" style="left:369px"></div>
<div class="hc" style="left:370px;width:208px"><span style="left:5px">Kostenträger</span></div>
<div class="hl" style="left:578px"></div>
<div class="hc" style="left:579px;width:208px"><span style="left:5px">Arbeitsgang</span></div>
<div class="hl" style="left:787px"></div>
<div class="hb" style="left:21px;width:767px"></div>
<div class="fc" style="top:177px"><span>03.02. Mo</span></div>
<div class="dc" style="top:177px;left:82px;width:35px"><span>07:00</span></div>
<div class="dc r" style="top:177px;left:118px;width:42px"><span>2,00</span></div>
<div class="dc" style="top:177px;left:161px;width:208px"><span>Fertigung {002}</span></div>
<div class="dc" style="top:177px;left:370px;width:208px"><span>VW-Hannover {970115}</span></div>
<div class="dc" style="top:177px;left:579px;width:208px"><span>Schleifen {206}</span></div>
<div class="gh" style="top:196px"></div>
<div class="fc" style="top:197px"><span></span></div>
<div class="dc" style="top:197px;left:82px;width:35px"><span>09:00</span></div>
<div class="dc r" style="top:197px;left:118px;width:42px"><span>3,00</span></div>
<div class="dc" style="top:197px;left:161px;width:208px"><span>Fertigung {002}</span></div>
<div class="dc" style="top:197px;left:370px;width:208px"><span>VW-Hannover {970115}</span></div>
<div class="dc" style="top:197px;left:579px;width:208px"><span>Drehen {201}</span></div>
<div class="gh" style="top:216px"></div>
<div class="fc" style="top:217px"><span></span></div>
<div class="dc" style="top:217px;left:82px;width:35px"><span>12:00</span></div>
<div class="dc" style="top:217px;left:161px;width:208px"><span>Vorgang beenden</span></div>
<div class="gh" style="top:236px"></div>
<div class="fc" style="top:237px"><span></span></div>
<div class="dc" style="top:237px;left:82px;width:35px"><span>13:00</span></div>
<div class="dc r" style="top:237px;left:118px;width:42px"><span>1,00</span></div>
<div class="dc" style="top:237px;left:161px;width:208px"><span>Fertigung {002}</span></div>
<div class="dc" style="top:237px;left:370px;width:208px"><span>VW-Hannover {970115}</span></div>
<div class="dc" style="top:237px;left:579px;width:208px"><span>Drehen {201}</span></div>
<div class="gh" style="top:256px"></div>
<div class="fc" style="top:257px"><span></span></div>
<div class="dc" style="top:257px;left:82px;width:35px"><span>14:00</span></div>
<div class="dc r" style="top:257px;left:118px;width:42px"><span>1,00</span></div>
<div class="dc" style="top:257px;left:161px;width:208px"><span>Fertigung {002}</span></div>
<div class="dc" style="top:257px;left:370px;width:208px"><span>VW-Hannover {970115}</span></div>
<div class="dc" style="top:257px;left:579px;width:208px"><span>Bohren {203}</span></div>
<div class="gh" style="top:276px"></div>
<div class="fc" style="top:277px"><span></span></div>
<div class="dc" style="top:277px;left:82px;width:35px"><span>15:00</span></div>
<div class="dc r" style="top:277px;left:118px;width:42px"><span>1,00</span></div>
<div class="dc" style="top:277px;left:161px;width:208px"><span>Fertigung {002}</span></div>
<div class="dc" style="top:277px;left:370px;width:208px"><span>VW-Hannover {970115}</span></div>
<div class="dc" style="top:277px;left:579px;width:208px"><span>Fräsen {202}</span></div>
<div class="gh" style="top:296px"></div>
<div class="fc" style="top:297px"><span></span></div>
<div class="dc" style="top:297px;left:82px;width:35px"><span>16:00</span></div>
<div class="dc" style="top:297px;left:161px;width:208px"><span>Vorgang beenden</span></div>
<div class="gh" style="top:316px"></div>
<div class="fc" style="top:317px"><span>04.02. Di</span></div>
<div class="selrow" style="top:317px"></div>
<div class="dc s" style="top:317px;left:82px;width:35px"><span>06:54</span></div>
<div class="dc r s" style="top:317px;left:118px;width:42px"><span>1,05</span></div>
<div class="dc s" style="top:317px;left:161px;width:208px"><span>Fertigung {002}</span></div>
<div class="dc s" style="top:317px;left:370px;width:208px"><span>VW-Hannover {970115}</span></div>
<div class="dc s" style="top:317px;left:579px;width:208px"><span>Fräsen {202}</span></div>
<div class="gh" style="top:336px"></div>
<div class="fc" style="top:337px"><span></span></div>
<div class="dc" style="top:337px;left:82px;width:35px"><span>07:57</span></div>
<div class="dc r" style="top:337px;left:118px;width:42px"><span>1,10</span></div>
<div class="dc" style="top:337px;left:161px;width:208px"><span>Härterei {003}</span></div>
<div class="dc" style="top:337px;left:370px;width:208px"><span>VW-Hannover {970115}</span></div>
<div class="dc" style="top:337px;left:579px;width:208px"><span>Glühen {302}</span></div>
<div class="gh" style="top:356px"></div>
<div class="fc" style="top:357px"><span></span></div>
<div class="dc" style="top:357px;left:82px;width:35px"><span>09:03</span></div>
<div class="dc r" style="top:357px;left:118px;width:42px"><span>1,85</span></div>
<div class="dc" style="top:357px;left:161px;width:208px"><span>Fertigung {002}</span></div>
<div class="dc" style="top:357px;left:370px;width:208px"><span>VW-Hannover {970115}</span></div>
<div class="dc" style="top:357px;left:579px;width:208px"><span>Fräsen {202}</span></div>
<div class="gh" style="top:376px"></div>
<div class="fc" style="top:377px"><span></span></div>
<div class="dc" style="top:377px;left:82px;width:35px"><span>10:54</span></div>
<div class="dc r" style="top:377px;left:118px;width:42px"><span>1,05</span></div>
<div class="dc" style="top:377px;left:161px;width:208px"><span>Fertigung {002}</span></div>
<div class="dc" style="top:377px;left:370px;width:208px"><span>VW-Hannover {970115}</span></div>
<div class="dc" style="top:377px;left:579px;width:208px"><span>Bohren {203}</span></div>
<div class="gh" style="top:396px"></div>
<div class="fc" style="top:397px"><span></span></div>
<div class="dc" style="top:397px;left:82px;width:35px"><span>11:57</span></div>
<div class="dc" style="top:397px;left:161px;width:208px"><span>Vorgang beenden</span></div>
<div class="gh" style="top:416px"></div>
<div class="fc" style="top:417px"><span></span></div>
<div class="dc" style="top:417px;left:82px;width:35px"><span>13:03</span></div>
<div class="dc r" style="top:417px;left:118px;width:42px"><span>0,90</span></div>
<div class="dc" style="top:417px;left:161px;width:208px"><span>Fertigung {002}</span></div>
<div class="dc" style="top:417px;left:370px;width:208px"><span>VW-Hannover {970115}</span></div>
<div class="dc" style="top:417px;left:579px;width:208px"><span>Hobeln {204}</span></div>
<div class="gh" style="top:436px"></div>
<div class="fc" style="top:437px"><span></span></div>
<div class="dc" style="top:437px;left:82px;width:35px"><span>13:57</span></div>
<div class="dc r" style="top:437px;left:118px;width:42px"><span>1,15</span></div>
<div class="dc" style="top:437px;left:161px;width:208px"><span>Härterei {003}</span></div>
<div class="dc" style="top:437px;left:370px;width:208px"><span>VW-Hannover {970115}</span></div>
<div class="dc" style="top:437px;left:579px;width:208px"><span>Glühen {302}</span></div>
<div class="gh" style="top:456px"></div>
<div class="fc" style="top:457px"><span></span></div>
<div class="dc" style="top:457px;left:82px;width:35px"><span>15:06</span></div>
<div class="dc r" style="top:457px;left:118px;width:42px"><span>1,05</span></div>
<div class="dc" style="top:457px;left:161px;width:208px"><span>Härterei {003}</span></div>
<div class="dc" style="top:457px;left:370px;width:208px"><span>Gemeinkosten {97001}</span></div>
<div class="dc" style="top:457px;left:579px;width:208px"><span>-</span></div>
<div class="gh" style="top:476px"></div>
<div class="fc" style="top:477px"><span></span></div>
<div class="dc" style="top:477px;left:82px;width:35px"><span>16:09</span></div>
<div class="dc" style="top:477px;left:161px;width:208px"><span>Vorgang beenden</span></div>
<div class="gh" style="top:496px"></div>
<div class="fc" style="top:497px"><span>05.02. Mi</span></div>
<div class="dc" style="top:497px;left:82px;width:35px"><span>07:03</span></div>
<div class="dc r" style="top:497px;left:118px;width:42px"><span>1,90</span></div>
<div class="dc" style="top:497px;left:161px;width:208px"><span>Fertigung {002}</span></div>
<div class="dc" style="top:497px;left:370px;width:208px"><span>VW-Hannover {970115}</span></div>
<div class="dc" style="top:497px;left:579px;width:208px"><span>Schleifen {206}</span></div>
<div class="gh" style="top:516px"></div>
<div class="fc" style="top:517px"><span></span></div>
<div class="dc" style="top:517px;left:82px;width:35px"><span>08:57</span></div>
<div class="dc r" style="top:517px;left:118px;width:42px"><span>0,95</span></div>
<div class="dc" style="top:517px;left:161px;width:208px"><span>Härterei {003}</span></div>
<div class="dc" style="top:517px;left:370px;width:208px"><span>VW-Hannover {970115}</span></div>
<div class="dc" style="top:517px;left:579px;width:208px"><span>Glühen {302}</span></div>
<div class="gh" style="top:536px"></div>
<div class="fc" style="top:537px"><span></span></div>
<div class="dc" style="top:537px;left:82px;width:35px"><span>09:54</span></div>
<div class="dc r" style="top:537px;left:118px;width:42px"><span>1,75</span></div>
<div class="dc" style="top:537px;left:161px;width:208px"><span>Galvanik {004}</span></div>
<div class="dc" style="top:537px;left:370px;width:208px"><span>VW-Hannover {970115}</span></div>
<div class="dc" style="top:537px;left:579px;width:208px"><span>Verzinken {403}</span></div>
<div class="gh" style="top:556px"></div>
<div class="fc" style="top:557px"><span></span></div>
<div class="dc" style="top:557px;left:82px;width:35px"><span>11:39</span></div>
<div class="dc" style="top:557px;left:161px;width:208px"><span>Vorgang beenden</span></div>
<div class="gh" style="top:576px"></div>
<div class="fc" style="top:577px"><span></span></div>
<div class="dc" style="top:577px;left:82px;width:35px"><span>12:42</span></div>
<div class="dc r" style="top:577px;left:118px;width:42px"><span>2,55</span></div>
<div class="dc" style="top:577px;left:161px;width:208px"><span>Fertigung {002}</span></div>
<div class="dc" style="top:577px;left:370px;width:208px"><span>Atlas-Air KG {970117}</span></div>
<div class="dc" style="top:577px;left:579px;width:208px"><span>Drehen {201}</span></div>
<div class="gh" style="top:596px"></div>
<div class="fc" style="top:597px"><span></span></div>
<div class="dc" style="top:597px;left:82px;width:35px"><span>15:15</span></div>
<div class="dc r" style="top:597px;left:118px;width:42px"><span>0,95</span></div>
<div class="dc" style="top:597px;left:161px;width:208px"><span>Härterei {003}</span></div>
<div class="dc" style="top:597px;left:370px;width:208px"><span>VW-Hannover {970115}</span></div>
<div class="dc" style="top:597px;left:579px;width:208px"><span>Glühen {302}</span></div>
<div class="gh" style="top:616px"></div>
<div class="fc" style="top:617px"><span></span></div>
<div class="dc" style="top:617px;left:82px;width:35px"><span>16:12</span></div>
<div class="dc" style="top:617px;left:161px;width:208px"><span>Vorgang beenden</span></div>
<div class="gh" style="top:636px"></div>
<div class="fc" style="top:637px"><span>06.02. Do</span></div>
<div class="dc" style="top:637px;left:82px;width:35px"><span>07:12</span></div>
<div class="dc r" style="top:637px;left:118px;width:42px"><span>1,35</span></div>
<div class="dc" style="top:637px;left:161px;width:208px"><span>Härterei {003}</span></div>
<div class="dc" style="top:637px;left:370px;width:208px"><span>VW-Hannover {970115}</span></div>
<div class="dc" style="top:637px;left:579px;width:208px"><span>Glühen {302}</span></div>
<div class="gh" style="top:656px"></div>
<div class="fc last" style="top:657px"><span></span></div>
<div class="dc" style="top:657px;left:82px;width:35px"><span>08:33</span></div>
<div class="dc r" style="top:657px;left:118px;width:42px"><span>1,05</span></div>
<div class="dc" style="top:657px;left:161px;width:208px"><span>Montage {005}</span></div>
<div class="dc" style="top:657px;left:370px;width:208px"><span>VW-Hannover {970115}</span></div>
<div class="dc" style="top:657px;left:579px;width:208px"><span>Qualitätsprüfung {504}</span></div>
<div class="gv" style="left:117px"></div>
<div class="gv" style="left:160px"></div>
<div class="gv" style="left:369px"></div>
<div class="gv" style="left:578px"></div>
<div class="gv" style="left:787px"></div>
<div class="a" style="left:117px;top:317px;width:1px;height:19px;background:#9ccaf8"></div>
<div class="a" style="left:160px;top:317px;width:1px;height:19px;background:#9ccaf8"></div>
<div class="a" style="left:369px;top:317px;width:1px;height:19px;background:#9ccaf8"></div>
<div class="a" style="left:578px;top:317px;width:1px;height:19px;background:#9ccaf8"></div>
<div class="a" style="left:787px;top:317px;width:1px;height:19px;background:#9ccaf8"></div>
<div id="vscroll" class="a"></div>
<svg class="a" style="left:996px;top:164px" width="7" height="4" viewBox="0 0 7 4"><path d="M0 4 H7 L3.5 0 Z" fill="#202020"/></svg>
<div class="a" style="left:991px;top:190px;width:15px;height:15px;border:1px solid #8c8c8c;border-radius:2px;background:linear-gradient(90deg,#f4f4f4,#e8e8e8 50%,#cfcfcf);box-shadow:inset 0 0 0 1px rgba(255,255,255,0.5)"></div>
<svg class="a" style="left:996px;top:666px" width="7" height="4" viewBox="0 0 7 4"><path d="M0 0 H7 L3.5 4 Z" fill="#202020"/></svg>
<div id="hbar" class="a"></div>
<div class="a" style="left:476px;top:678px;width:76px;height:1px;background:repeating-linear-gradient(90deg,#707070 0 2px,#fff 2px 4px)"></div>

<!-- status -->
<div id="status" class="a"></div>
<div class="a txt" style="left:13px;top:714px;font-size:12.5px">manuelle Buchung</div>
<svg class="a" style="left:836px;top:713px" width="16" height="15" viewBox="0 0 16 15"><g fill="#b8b8b8"><rect x="14" y="1" width="1" height="1"/><rect x="14" y="3" width="1" height="1"/><rect x="14" y="5" width="1" height="1"/><rect x="14" y="7" width="1" height="1"/><rect x="14" y="9" width="1" height="1"/><rect x="14" y="11" width="1" height="1"/><rect x="14" y="13" width="1" height="1"/><rect x="1" y="7" width="1" height="6"/><rect x="4" y="5" width="6" height="1" opacity="0.6"/><rect x="4" y="10" width="6" height="1" opacity="0.6"/><rect x="10" y="1" width="3" height="1"/></g></svg>
<div class="sp" style="left:854px;width:55px"></div>
<div class="a txt" style="left:860px;top:715px;font-size:12px">02/2014</div>
<div class="sp" style="left:910px;width:111px"></div>
<div class="a txt" style="left:917px;top:715px;font-size:12px;letter-spacing:0.1px">05.10.2014 21:57</div>
</body></html>
